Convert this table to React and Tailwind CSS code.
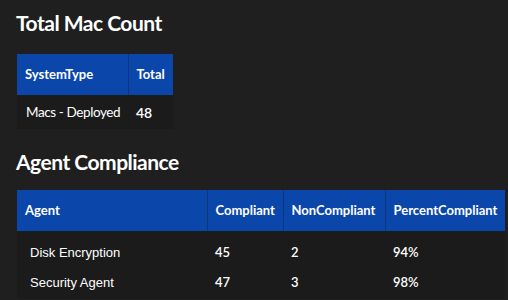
export default function App() {
  const lato = { fontFamily: 'Lato, "Open Sans", sans-serif' };
  const arial = { fontFamily: '"Liberation Sans", Arial, sans-serif' };
  return (
    <div className="w-[508px] h-[300px] overflow-hidden bg-[#1f1f1f] text-white" style={lato}>
      <div className="pl-4 pt-[10px]">
        <h1 className="text-[21px] font-bold leading-[26px] tracking-[-0.5px] whitespace-nowrap">Total Mac Count</h1>
        <table className="mt-[18px] ml-px border-collapse whitespace-nowrap table-fixed w-[156px]">
          <thead>
            <tr className="bg-[#0b46ab] h-[41px]">
              <th className="w-[111px] text-left pl-2 text-[13px] font-bold border-r border-[#0a367f]">SystemType</th>
              <th className="w-[45px] text-left pl-2 text-[13px] font-bold">Total</th>
            </tr>
          </thead>
          <tbody>
            <tr className="bg-[#1b1b1b] h-[34px]">
              <td className="pl-[9px] text-[13.5px] tracking-[-0.4px]">Macs - Deployed</td>
              <td className="pl-2 text-[14px] font-semibold">48</td>
            </tr>
          </tbody>
        </table>
        <h2 className="mt-[20px] text-[21px] font-bold leading-[26px] tracking-[-0.5px] whitespace-nowrap">Agent Compliance</h2>
        <table className="mt-[15px] ml-px border-collapse whitespace-nowrap table-fixed w-[488px]">
          <thead>
            <tr className="bg-[#0b46ab] h-[41px]">
              <th className="w-[190px] text-left pl-2 text-[13px] font-bold border-r border-[#0a367f]">Agent</th>
              <th className="w-[76px] text-left pl-2 text-[13px] font-bold border-r border-[#0a367f]">Compliant</th>
              <th className="w-[102px] text-left pl-2 text-[13px] font-bold border-r border-[#0a367f]">NonCompliant</th>
              <th className="w-[120px] text-left pl-2 text-[13px] font-bold">PercentCompliant</th>
            </tr>
          </thead>
          <tbody className="bg-[#1b1b1b]">
            <tr className="h-[40px]">
              <td className="pl-[13px] pt-[3px] text-[13px]" style={arial}>Disk Encryption</td>
              <td className="pl-2 pt-[3px] text-[13px] font-semibold">45</td>
              <td className="pl-2 pt-[3px] text-[13px] font-semibold">2</td>
              <td className="pl-2 pt-[3px] text-[13px] font-semibold">94%</td>
            </tr>
            <tr className="h-[28px]">
              <td className="pl-[13px] pb-[4px] text-[13px]" style={arial}>Security Agent</td>
              <td className="pl-2 pb-[4px] text-[13px] font-semibold">47</td>
              <td className="pl-2 pb-[4px] text-[13px] font-semibold">3</td>
              <td className="pl-2 pb-[4px] text-[13px] font-semibold">98%</td>
            </tr>
          </tbody>
        </table>
      </div>
    </div>
  );
}
